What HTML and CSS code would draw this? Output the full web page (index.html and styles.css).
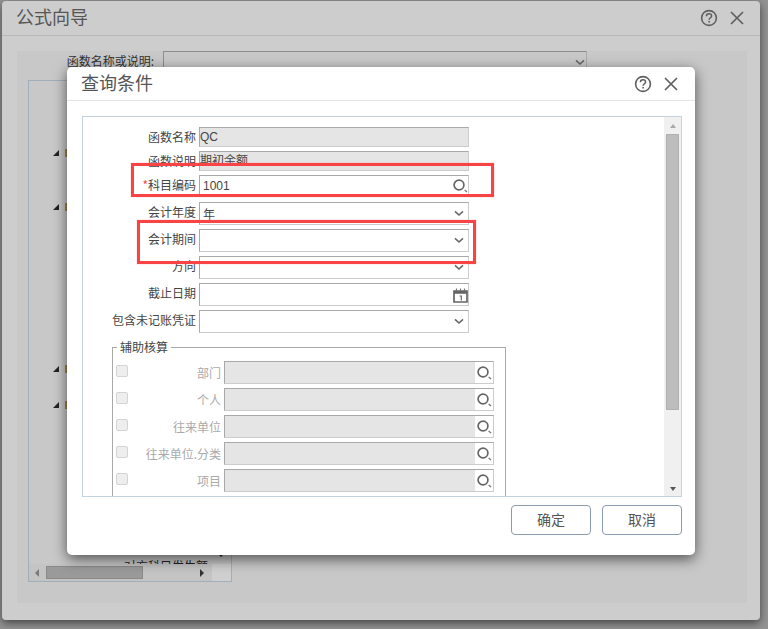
FILE: index.html
```html
<!DOCTYPE html>
<html lang="zh">
<head>
<meta charset="utf-8">
<title>查询条件</title>
<link rel="stylesheet" href="styles.css">
</head>
<body>
<svg class="defs" width="0" height="0" aria-hidden="true">
  <symbol id="i-search" viewBox="0 0 15 14"><circle cx="6" cy="6" r="4.9" fill="none" stroke="#666" stroke-width="1.7"/><path d="M11.6 11 L14 13" stroke="#777" stroke-width="1.3" fill="none"/></symbol>
  <symbol id="i-chev" viewBox="0 0 10 7"><path d="M1 1.4 L5 5 L9 1.4" stroke="#666" stroke-width="1.6" fill="none"/></symbol>
  <symbol id="i-help" viewBox="0 0 18 18"><circle cx="9" cy="9" r="7.4" fill="none" stroke="#606060" stroke-width="1.6"/><path d="M6.4 7.2 C6.4 5.6 7.6 4.8 9 4.8 C10.5 4.8 11.6 5.7 11.6 7 C11.6 8.7 9.1 8.9 9.1 10.8" fill="none" stroke="#606060" stroke-width="1.5"/><rect x="8.3" y="11.9" width="1.6" height="1.6" fill="#606060"/></symbol>
  <symbol id="i-close" viewBox="0 0 14 14"><path d="M1 1 L13 13 M13 1 L1 13" stroke="#606060" stroke-width="1.7" fill="none"/></symbol>
  <symbol id="i-cal" viewBox="0 0 15 15"><path d="M1 3 H14 V14 H1 Z" fill="none" stroke="#666" stroke-width="1.7"/><rect x="1" y="3" width="13" height="2.8" fill="#666"/><path d="M3.5 .5 V3 M7.5 .5 V3 M11.5 .5 V3" stroke="#777" stroke-width="1.2"/><path d="M6.5 8 H8.3 V12.4" stroke="#666" stroke-width="1.2" fill="none"/></symbol>
</svg>

<div class="window">
  <header class="win-head">
    <h1 class="win-title">公式向导</h1>
    <svg class="ic-help"><use href="#i-help"/></svg>
    <svg class="ic-close"><use href="#i-close"/></svg>
  </header>
  <div class="win-panel">
    <div class="search-row">
      <span class="search-label">函数名称或说明:</span>
      <div class="search-select"><svg class="ic-chev"><use href="#i-chev"/></svg></div>
    </div>
    <div class="tree">
      <div class="tree-body">
        <div class="node node-a"><i class="tri"></i><i class="ico"></i></div>
        <div class="node node-b"><i class="tri"></i><i class="ico"></i></div>
        <div class="node node-c"><i class="tri"></i><i class="ico"></i></div>
        <div class="node node-d"><i class="tri"></i><i class="ico"></i></div>
        <div class="leaf"><i class="dash"></i>对方科目发生额</div>
        <i class="tree-arrow"></i>
      </div>
      <div class="hscroll">
        <div class="hbar"><i class="arrow-l"></i><i class="hthumb"></i><i class="arrow-r"></i></div>
        <div class="hcorner"></div>
      </div>
    </div>
  </div>
</div>

<div class="modal">
  <header class="modal-head">
    <h2 class="modal-title">查询条件</h2>
    <svg class="ic-help"><use href="#i-help"/></svg>
    <svg class="ic-close"><use href="#i-close"/></svg>
  </header>
  <div class="modal-body">
    <div class="box">
      <div class="form">
        <div class="row row-s"><label class="lab">函数名称</label><div class="field ro">QC</div></div>
        <div class="row row-s"><label class="lab">函数说明</label><div class="field ro">期初余额</div></div>
        <div class="row row-s gap-l"><label class="lab"><span class="req">*</span>科目编码</label><div class="field val"><span class="grow">1001</span><svg class="ic-search"><use href="#i-search"/></svg></div></div>
        <div class="row"><label class="lab">会计年度</label><div class="field val"><span class="grow">年</span><svg class="ic-chev"><use href="#i-chev"/></svg></div></div>
        <div class="row"><label class="lab">会计期间</label><div class="field val"><span class="grow"></span><svg class="ic-chev"><use href="#i-chev"/></svg></div></div>
        <div class="row"><label class="lab">方向</label><div class="field val"><span class="grow"></span><svg class="ic-chev"><use href="#i-chev"/></svg></div></div>
        <div class="row"><label class="lab">截止日期</label><div class="field val"><span class="grow"></span><svg class="ic-cal"><use href="#i-cal"/></svg></div></div>
        <div class="row"><label class="lab">包含未记账凭证</label><div class="field val"><span class="grow"></span><svg class="ic-chev"><use href="#i-chev"/></svg></div></div>
        <fieldset class="aux">
          <legend class="aux-legend">辅助核算</legend>
          <div class="aux-row"><i class="chk"></i><label class="aux-lab">部门</label><div class="aux-field"><span class="grow fill"></span><span class="aux-btn"><svg class="ic-search"><use href="#i-search"/></svg></span></div></div>
          <div class="aux-row"><i class="chk"></i><label class="aux-lab">个人</label><div class="aux-field"><span class="grow fill"></span><span class="aux-btn"><svg class="ic-search"><use href="#i-search"/></svg></span></div></div>
          <div class="aux-row"><i class="chk"></i><label class="aux-lab">往来单位</label><div class="aux-field"><span class="grow fill"></span><span class="aux-btn"><svg class="ic-search"><use href="#i-search"/></svg></span></div></div>
          <div class="aux-row"><i class="chk"></i><label class="aux-lab">往来单位.分类</label><div class="aux-field"><span class="grow fill"></span><span class="aux-btn"><svg class="ic-search"><use href="#i-search"/></svg></span></div></div>
          <div class="aux-row"><i class="chk"></i><label class="aux-lab">项目</label><div class="aux-field"><span class="grow fill"></span><span class="aux-btn"><svg class="ic-search"><use href="#i-search"/></svg></span></div></div>
        </fieldset>
      </div>
      <div class="vscroll"><i class="arrow-u"></i><i class="vthumb"></i><i class="arrow-d"></i></div>
    </div>
    <div class="actions">
      <button class="btn">确定</button>
      <button class="btn">取消</button>
    </div>
  </div>
</div>

<div class="mark mark-a"></div>
<div class="mark mark-b"></div>
</body>
</html>
```

FILE: styles.css
```css
* { box-sizing: border-box; }
html, body { margin: 0; padding: 0; }
body {
  width: 768px; height: 629px; overflow: hidden; position: relative;
  background: #939393;
  font-family: "Noto Sans CJK SC", "Liberation Sans", sans-serif;
  font-size: 12px; color: #444;
}
.defs { position: absolute; }
.grow { flex: 1; }

/* outer dimmed window */
.window {
  margin: 1px 8px 0 2px; height: 619px;
  background: #cdcdcd; border-radius: 4px;
  box-shadow: 0 3px 8px rgba(0,0,0,.55);
  display: flex; flex-direction: column;
}
.win-head {
  height: 35px; flex: none; padding: 0 16px 0 15px;
  border-bottom: 1px solid #b8b8b8;
  display: flex; align-items: center;
}
.win-title { margin: -4px auto 0 0; font-size: 18px; font-weight: 400; color: #555; line-height: 30px; position: relative; left: -1px; }
.win-head .ic-help { margin-right: 9px; }
.ic-help { width: 18px; height: 18px; }
.ic-close { width: 14px; height: 14px; margin-left: 3px; }
.win-panel {
  margin: 15px 13px 0 15px; height: 552px;
  background: #c8c8c8; padding: 0 11px;
}
.search-row { display: flex; height: 29px; }
.search-label { width: 126px; margin-right: 9px; text-align: right; line-height: 20px; color: #333; white-space: nowrap; }
.search-select {
  width: 424px; height: 23px; border: 1px solid #8e8e8e; border-right-color: #aaa;
  display: flex; justify-content: flex-end; align-items: center; padding: 0 1px 0 0;
}
.ic-chev { width: 10px; height: 7px; flex: none; }

.tree {
  width: 204px; height: 502px; border: 1px solid #a0afba;
  display: flex; flex-direction: column;
}
.tree-body { height: 483px; overflow: hidden; padding-left: 24px; position: relative; }
.node { height: 12px; display: flex; align-items: center; }
.node-a { margin-top: 66px; }
.node-b { margin-top: 42px; }
.node-c { margin-top: 150px; }
.node-d { margin-top: 24px; }
.tri { width: 0; height: 0; border-left: 6px solid transparent; border-bottom: 6px solid #222; }
.ico { width: 4px; height: 8px; margin-left: 6px; background: #9d8440; }
.leaf { margin: 145px 0 0 59px; line-height: 20px; color: #222; white-space: nowrap; display: flex; align-items: center; overflow: hidden; }
.dash { width: 6px; height: 1px; background: #9d7a30; margin-right: 6px; }
.tree-arrow { position: absolute; left: 189px; top: 473px; width: 0; height: 0; border: 3px solid transparent; border-bottom: 0; border-top: 3px solid #333; }
.hscroll { height: 17px; display: flex; }
.hbar { width: 183px; background: #c4c4c4; display: flex; align-items: center; padding: 0 0 0 6px; }
.hcorner { flex: 1; background: #cfcfcf; }
.arrow-l { width: 0; height: 0; border: 4px solid transparent; border-left: 0; border-right: 4px solid #7a7a7a; margin-right: 7px; }
.hthumb { width: 97px; height: 13px; background: #9a9a9a; border: 1px solid #8a8a8a; }
.arrow-r { width: 0; height: 0; border: 4px solid transparent; border-right: 0; border-left: 4px solid #333; margin-left: 57px; }

/* modal */
.modal {
  position: absolute; left: 67px; top: 67px; width: 628px; height: 488px;
  background: #fff; border-radius: 5px;
  box-shadow: 0 4px 14px rgba(0,0,0,.6);
  display: flex; flex-direction: column;
}
.modal-head {
  height: 34px; flex: none; padding: 0 17px 0 14px;
  border-bottom: 1px solid #e5e5e5;
  display: flex; align-items: center;
}
.modal-title { margin: -3px auto 0 0; font-size: 18px; font-weight: 400; color: #555; line-height: 30px; }
.modal-head .ic-help { margin-right: 9px; }
.modal-body { padding: 15px 13px 0 15px; }
.box {
  height: 381px; border: 1px solid #c3d2de;
  display: flex; overflow: hidden;
}
.form { flex: 1; padding-top: 10px; min-width: 0; }
.row { display: flex; height: 23px; margin-bottom: 4px; }
.row-s { height: 20px; }
.gap-l { margin-bottom: 7px; }
.lab { width: 113px; margin-right: 3px; text-align: right; line-height: 20px; white-space: nowrap; }
.req { color: #f04a4a; }
.field {
  width: 270px; border: 1px solid #ccc; border-top-color: #a9a9a9; border-left-color: #a9a9a9;
  display: flex; align-items: center; line-height: 18px; color: #444;
  font-family: "Liberation Sans", "Noto Sans CJK SC", sans-serif;
}
.ro { background: #e5e5e5; }
.val { padding-left: 3px; padding-top: 2px; }
.val .ic-chev { margin: -2px 4px 0 0; }
.val .ic-search { margin-top: -1px; }
.ic-search { width: 15px; height: 14px; flex: none; }
.ic-cal { width: 15px; height: 15px; flex: none; margin: -1px 0 0 0; }

.aux {
  margin: 6px 0 0 29px; padding: 0 0 20px 3px; width: 394px; min-width: 0;
  border: 1px solid #a9a9a9;
}
.aux-legend { margin-left: 1px; padding: 0 3px; line-height: 16px; color: #444; }
.aux-row { display: flex; align-items: center; height: 23px; margin: 6px 0 -2px; }
.chk { width: 12px; height: 12px; border: 1px solid #d4d4d4; border-radius: 2px; background: #eee; flex: none; margin-top: -3px; }
.aux-lab { width: 93px; margin-right: 3px; text-align: right; color: #aaa; white-space: nowrap; }
.aux-field { width: 270px; height: 23px; border: 1px solid #ccc; border-top-color: #a9a9a9; border-left-color: #a9a9a9; display: flex; }
.fill { background: #e5e5e5; }
.aux-btn { width: 18px; display: flex; align-items: center; justify-content: center; padding-top: 1px; }

.vscroll { width: 17px; flex: none; background: #f0f0f0; display: flex; flex-direction: column; align-items: center; }
.arrow-u { width: 0; height: 0; border: 3.5px solid transparent; border-top: 0; border-bottom: 4px solid #aaa; margin-top: 7px; }
.vthumb { width: 13px; height: 276px; margin-top: 6px; background: #bdbdbd; border: 1px solid #b0b0b0; }
.arrow-d { width: 0; height: 0; border: 3.5px solid transparent; border-bottom: 0; border-top: 4px solid #555; margin-top: auto; margin-bottom: 5px; }

.actions { display: flex; justify-content: flex-end; gap: 11px; margin-top: 8px; }
.btn {
  width: 80px; height: 30px; background: #fff;
  border: 1px solid #8b9bb0; border-radius: 4px;
  font: 14px "Noto Sans CJK SC", sans-serif; color: #555; padding: 0 0 3px;
}

/* red annotations drawn over the screenshot */
.mark { position: absolute; border: 3px solid #f84444; box-shadow: 0 0 1px rgba(245,67,67,.5); }
.mark-a { left: 131px; top: 163px; width: 363px; height: 34px; }
.mark-b { left: 137px; top: 220px; width: 339px; height: 44px; }
```
